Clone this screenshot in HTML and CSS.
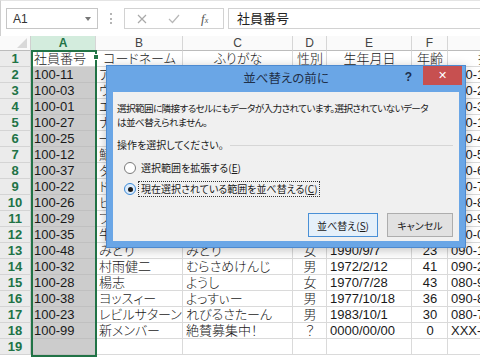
FILE: index.html
```html
<!DOCTYPE html>
<html lang="ja">
<head>
  <meta charset="UTF-8" />
  <meta name="viewport" content="width=device-width, initial-scale=1.0"/>
  <title>並べ替えの前に</title>
  <link rel="stylesheet" href="styles.css">
</head>
<body>
  <!-- 数式バー -->
  <div class="formula-bar">
    <div class="name-box"><span>A1</span><span class="drop"></span></div>
    <div class="grip"></div>
    <div class="fx-buttons">
      <svg class="fx-cancel" width="10" height="10" viewBox="0 0 10 10"><path d="M1 1L9 9M9 1L1 9" /></svg>
      <svg class="fx-enter" width="12" height="10" viewBox="0 0 12 10"><path d="M1 5L4.5 8.5L11 1" /></svg>
      <span class="fx-insert"><i>f</i><small>x</small></span>
    </div>
    <div class="formula-input">社員番号</div>
  </div>

  <!-- シート -->
  <div class="sheet">
    <div class="row head">
      <div class="corner"><span class="tri"></span></div>
      <div class="col-hd active">A</div>
      <div class="col-hd">B</div>
      <div class="col-hd">C</div>
      <div class="col-hd">D</div>
      <div class="col-hd">E</div>
      <div class="col-hd">F</div>
      <div class="col-hd">G</div>
    </div>

    <div class="row">
      <div class="row-hd">1</div>
      <div class="cell a1">社員番号</div>
      <div class="cell ctr">コードネーム</div>
      <div class="cell ctr">ふりがな</div>
      <div class="cell ctr">性別</div>
      <div class="cell ctr">生年月日</div>
      <div class="cell ctr">年齢</div>
      <div class="cell ctr">携帯電話</div>
    </div>
    <div class="row">
      <div class="row-hd">2</div>
      <div class="cell sel">100-11</div>
      <div class="cell">アキラ</div>
      <div class="cell">あきら</div>
      <div class="cell ctr">男</div>
      <div class="cell">1985/4/3</div>
      <div class="cell ctr">28</div>
      <div class="cell">090-1111-2222</div>
    </div>
    <div class="row">
      <div class="row-hd">3</div>
      <div class="cell sel">100-03</div>
      <div class="cell">ウルフ</div>
      <div class="cell">うるふ</div>
      <div class="cell ctr">男</div>
      <div class="cell">1979/12/5</div>
      <div class="cell ctr">34</div>
      <div class="cell">090-2345-6789</div>
    </div>
    <div class="row">
      <div class="row-hd">4</div>
      <div class="cell sel">100-01</div>
      <div class="cell">エース</div>
      <div class="cell">えーす</div>
      <div class="cell ctr">男</div>
      <div class="cell">1975/1/20</div>
      <div class="cell ctr">38</div>
      <div class="cell">090-3456-7890</div>
    </div>
    <div class="row">
      <div class="row-hd">5</div>
      <div class="cell sel">100-27</div>
      <div class="cell">ナナ</div>
      <div class="cell">なな</div>
      <div class="cell ctr">女</div>
      <div class="cell">1988/7/7</div>
      <div class="cell ctr">25</div>
      <div class="cell">080-1234-5678</div>
    </div>
    <div class="row">
      <div class="row-hd">6</div>
      <div class="cell sel">100-25</div>
      <div class="cell">一休</div>
      <div class="cell">いっきゅう</div>
      <div class="cell ctr">男</div>
      <div class="cell">1981/3/15</div>
      <div class="cell ctr">32</div>
      <div class="cell">090-4567-8901</div>
    </div>
    <div class="row">
      <div class="row-hd">7</div>
      <div class="cell sel">100-12</div>
      <div class="cell">鯖缶</div>
      <div class="cell">さばかん</div>
      <div class="cell ctr">男</div>
      <div class="cell">1984/9/30</div>
      <div class="cell ctr">29</div>
      <div class="cell">090-5678-9012</div>
    </div>
    <div class="row">
      <div class="row-hd">8</div>
      <div class="cell sel">100-37</div>
      <div class="cell">ダイス</div>
      <div class="cell">だいす</div>
      <div class="cell ctr">男</div>
      <div class="cell">1990/2/2</div>
      <div class="cell ctr">23</div>
      <div class="cell">080-6789-0123</div>
    </div>
    <div class="row">
      <div class="row-hd">9</div>
      <div class="cell sel">100-22</div>
      <div class="cell">ドラゴン</div>
      <div class="cell">どらごん</div>
      <div class="cell ctr">男</div>
      <div class="cell">1976/5/5</div>
      <div class="cell ctr">37</div>
      <div class="cell">090-7890-1234</div>
    </div>
    <div class="row">
      <div class="row-hd">10</div>
      <div class="cell sel">100-26</div>
      <div class="cell">ビッグ</div>
      <div class="cell">びっぐ</div>
      <div class="cell ctr">男</div>
      <div class="cell">1973/8/19</div>
      <div class="cell ctr">40</div>
      <div class="cell">090-8901-2345</div>
    </div>
    <div class="row">
      <div class="row-hd">11</div>
      <div class="cell sel">100-29</div>
      <div class="cell">フェニックス</div>
      <div class="cell">ふぇにっくす</div>
      <div class="cell ctr">女</div>
      <div class="cell">1986/11/11</div>
      <div class="cell ctr">27</div>
      <div class="cell">090-9012-3456</div>
    </div>
    <div class="row">
      <div class="row-hd">12</div>
      <div class="cell sel">100-35</div>
      <div class="cell">牛丼</div>
      <div class="cell">ぎゅうどん</div>
      <div class="cell ctr">男</div>
      <div class="cell">1982/6/1</div>
      <div class="cell ctr">31</div>
      <div class="cell">090-0123-4567</div>
    </div>
    <div class="row">
      <div class="row-hd">13</div>
      <div class="cell sel">100-48</div>
      <div class="cell">みどり</div>
      <div class="cell">みどり</div>
      <div class="cell ctr">女</div>
      <div class="cell">1990/9/7</div>
      <div class="cell ctr">23</div>
      <div class="cell">090-1357-2468</div>
    </div>
    <div class="row">
      <div class="row-hd">14</div>
      <div class="cell sel">100-32</div>
      <div class="cell">村雨健二</div>
      <div class="cell">むらさめけんじ</div>
      <div class="cell ctr">男</div>
      <div class="cell">1972/2/12</div>
      <div class="cell ctr">41</div>
      <div class="cell">090-2468-1357</div>
    </div>
    <div class="row">
      <div class="row-hd">15</div>
      <div class="cell sel">100-28</div>
      <div class="cell">楊志</div>
      <div class="cell">ようし</div>
      <div class="cell ctr">女</div>
      <div class="cell">1970/7/28</div>
      <div class="cell ctr">43</div>
      <div class="cell">080-9876-5432</div>
    </div>
    <div class="row">
      <div class="row-hd">16</div>
      <div class="cell sel">100-38</div>
      <div class="cell">ヨッスィー</div>
      <div class="cell">よっすぃー</div>
      <div class="cell ctr">男</div>
      <div class="cell">1977/10/18</div>
      <div class="cell ctr">36</div>
      <div class="cell">090-8765-4321</div>
    </div>
    <div class="row">
      <div class="row-hd">17</div>
      <div class="cell sel">100-23</div>
      <div class="cell">レビルサターン</div>
      <div class="cell">れびるさたーん</div>
      <div class="cell ctr">男</div>
      <div class="cell">1983/10/1</div>
      <div class="cell ctr">30</div>
      <div class="cell">080-7654-3210</div>
    </div>
    <div class="row">
      <div class="row-hd">18</div>
      <div class="cell sel">100-99</div>
      <div class="cell">新メンバー</div>
      <div class="cell">絶賛募集中！</div>
      <div class="cell ctr">？</div>
      <div class="cell">0000/00/00</div>
      <div class="cell ctr">0</div>
      <div class="cell">XXX-XXXX-XXXX</div>
    </div>
    <div class="row">
      <div class="row-hd">19</div>
      <div class="cell sel"></div>
      <div class="cell"></div>
      <div class="cell"></div>
      <div class="cell"></div>
      <div class="cell"></div>
      <div class="cell"></div>
      <div class="cell"></div>
    </div>

    <!-- 列Aの選択枠 -->
    <div class="selection"><span class="handle"></span></div>
  </div>

  <!-- ダイアログ -->
  <div class="dialog">
    <div class="dlg-title">
      <h1>並べ替えの前に</h1>
      <div class="dlg-ctrls">
        <span class="help">?</span>
        <span class="close">✕</span>
      </div>
    </div>
    <div class="dlg-body">
      <p class="msg">選択範囲に隣接するセルにもデータが入力されています。選択されていないデータ<br>は並べ替えられません。</p>
      <div class="group">操作を選択してください。</div>
      <label class="radio"><span class="dot"></span><span class="lbl">選択範囲を拡張する(<u>E</u>)</span></label>
      <label class="radio checked"><span class="dot"></span><span class="lbl focus">現在選択されている範囲を並べ替える(<u>C</u>)</span></label>
      <div class="buttons">
        <button class="btn default">並べ替え(<u>S</u>)</button>
        <button class="btn">キャンセル</button>
      </div>
    </div>
  </div>
</body>
</html>
```

FILE: styles.css
```css
* {
  box-sizing: border-box;
}

body {
  margin: 0;
  width: 480px;
  height: 359px;
  overflow: hidden;
  position: relative;
  background-color: #fff;
  font-family: "Liberation Sans", "Noto Sans CJK JP", sans-serif;
  font-feature-settings: "palt";
  color: #111;
}

/* Formula bar */
.formula-bar {
  height: 36px;
  display: flex;
  align-items: flex-start;
  padding: 7px 0 0 5px;
  border-top: 1px solid #e4e4e4;
  border-left: 1px solid #cfcfcf;
}

.name-box {
  width: 92px;
  height: 21px;
  border: 1px solid #c6c6c6;
  display: flex;
  align-items: center;
  justify-content: space-between;
  padding: 0 6px 0 6px;
  font-size: 12px;
  color: #333;
}

.name-box .drop {
  width: 0;
  height: 0;
  border-left: 3.5px solid transparent;
  border-right: 3.5px solid transparent;
  border-top: 4px solid #777;
}

.grip {
  width: 2px;
  height: 11px;
  margin: 5px 12px 0 12px;
  border-left: 2px dotted #b5b5b5;
}

.fx-buttons {
  width: 100px;
  height: 21px;
  border: 1px solid #d2d2d2;
  display: flex;
  align-items: center;
  padding-left: 12px;
}

.fx-buttons svg path {
  fill: none;
  stroke-width: 1.2;
}

.fx-cancel path {
  stroke: #a9a9a9;
}

.fx-enter {
  margin-left: 21px;
}

.fx-enter path {
  stroke: #b8b8b8;
}

.fx-insert {
  margin-left: 21px;
  font-family: "Liberation Serif", serif;
  color: #555;
  font-size: 13px;
}

.fx-insert small {
  font-size: 8px;
  font-style: italic;
}

.formula-input {
  flex: 1;
  height: 21px;
  margin-left: 4px;
  border: 1px solid #d2d2d2;
  border-right: none;
  padding-left: 8px;
  font-size: 13px;
  line-height: 19px;
  color: #222;
}

/* Sheet grid */
.sheet {
  position: relative;
}

.row {
  display: grid;
  grid-template-columns: 31px 65px 87px 110px 34px 85px 36px 112px;
  height: 16px;
}

.row.head {
  height: 15px;
}

.cell {
  border-right: 1px solid #dadada;
  border-bottom: 1px solid #dadada;
  font-size: 13px;
  font-weight: 300;
  line-height: 15px;
  padding: 0 2px 0 3px;
  white-space: nowrap;
  overflow: hidden;
  color: #1a1a1a;
}

.cell.ctr {
  text-align: center;
}

.cell.a1 {
  background-color: #fff;
}

.cell.sel {
  background-color: #cccccc;
  border-bottom-color: #c0c0c0;
}

.corner {
  background-color: #fafafa;
  border-right: 1px solid #d0d0d0;
  border-bottom: 1px solid #bcbcbc;
  display: flex;
  justify-content: flex-end;
  align-items: flex-end;
  padding: 0 3px 2px 0;
}

.corner .tri {
  width: 0;
  height: 0;
  border-left: 10px solid transparent;
  border-bottom: 10px solid #d9d9d9;
}

.col-hd {
  background-color: #fafafa;
  border-right: 1px solid #d6d6d6;
  border-bottom: 1px solid #bcbcbc;
  font-size: 12px;
  line-height: 14px;
  text-align: center;
  color: #444;
}

.col-hd.active {
  background-color: #d3ecdd;
  color: #217346;
  font-weight: bold;
}

.row-hd {
  background-color: #ebebeb;
  border-right: 1px solid #c6c6c6;
  border-bottom: 1px solid #d4d4d4;
  font-size: 13px;
  font-weight: bold;
  line-height: 15px;
  text-align: center;
  color: #217346;
}

.selection {
  position: absolute;
  left: 31px;
  top: 14px;
  width: 66px;
  bottom: -2px;
  border: 2px solid #217346;
}

.selection .handle {
  position: absolute;
  right: -4px;
  top: 2px;
  width: 6px;
  height: 6px;
  background-color: #217346;
  border: 1px solid #fff;
}

/* Dialog */
.dialog {
  position: absolute;
  left: 106px;
  top: 65px;
  width: 360px;
  height: 183px;
  background-color: #6aa6e6;
  border: 1px solid #4d8ad0;
  padding: 0 6px 6px 6px;
  display: flex;
  flex-direction: column;
  box-shadow: 0 2px 10px rgba(0, 0, 0, 0.25);
}

.dlg-title {
  height: 26px;
  display: grid;
  grid-template-columns: 1fr auto 1fr;
}

.dlg-title h1 {
  grid-column: 2;
  margin: 0;
  font-size: 12.5px;
  font-weight: normal;
  line-height: 26px;
  color: #1f2f48;
}

.dlg-ctrls {
  justify-self: end;
  display: flex;
  align-items: flex-start;
  margin-right: -3px;
}

.help {
  font-size: 12px;
  font-weight: bold;
  color: #1c2e4d;
  margin: 4px 11px 0 0;
}

.close {
  width: 39px;
  height: 19px;
  background-color: #c75050;
  color: #fff;
  font-size: 11px;
  display: flex;
  align-items: center;
  justify-content: center;
}

.dlg-body {
  flex: 1;
  background-color: #f0f0f0;
  padding: 9px 6px 4px 4px;
  display: flex;
  flex-direction: column;
  font-size: 10px;
  line-height: 14px;
  color: #1a1a1a;
  font-family: "Noto Sans CJK JP", sans-serif;
}

.msg {
  margin: 0;
  white-space: nowrap;
  font-size: 9.6px;
  letter-spacing: -0.6px;
}

.group {
  margin-top: 9px;
  display: flex;
  align-items: center;
}

.group::after {
  content: "";
  flex: 1;
  height: 1px;
  margin-left: 6px;
  background-color: #d6d6d6;
}

.radio {
  display: flex;
  align-items: center;
  height: 16px;
  margin-top: 8px;
  padding-left: 7px;
}

.radio + .radio {
  margin-top: 5px;
}

.radio .dot {
  width: 12px;
  height: 12px;
  border-radius: 50%;
  border: 1px solid #7a7a7a;
  background-color: #fff;
  margin-right: 2px;
  display: flex;
  align-items: center;
  justify-content: center;
}

.radio .lbl {
  padding: 0 1px 0 2px;
  line-height: 14px;
  border: 1px solid transparent;
}

.radio.checked .dot {
  border-color: #3c8ad8;
  background-color: #dcecfc;
}

.radio.checked .dot::after {
  content: "";
  width: 5px;
  height: 5px;
  border-radius: 50%;
  background-color: #1a1a1a;
}

.radio .lbl.focus {
  border: 1px dotted #333;
}

.buttons {
  margin-top: auto;
  display: flex;
  justify-content: flex-end;
  gap: 9px;
}

.btn {
  height: 24px;
  width: 66px;
  font-family: "Noto Sans CJK JP", sans-serif;
  font-feature-settings: "palt";
  font-size: 10px;
  color: #1a1a1a;
  background-color: #e1e1e1;
  border: 1px solid #adadad;
  padding: 0;
}

.btn.default {
  width: 70px;
  background-color: #e5f0fa;
  border-color: #4a90d6;
}
```
